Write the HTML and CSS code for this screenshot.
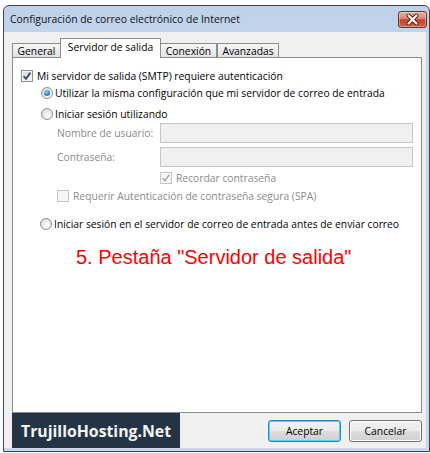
FILE: index.html
```html
<!DOCTYPE html>
<html lang="es">
<head>
<meta charset="utf-8">
<title>Configuración de correo electrónico de Internet</title>
<link rel="stylesheet" href="styles.css">
</head>
<body>
<div class="window">
  <div class="titlebar">
    <span class="title">Configuración de correo electrónico de Internet</span>
    <span class="close">
      <svg width="27" height="15" viewBox="0 0 27 15">
        <path d="M9.5 3.5 L17.5 11.5 M17.5 3.5 L9.5 11.5" stroke="#5b1a12" stroke-width="4" stroke-linecap="round" fill="none"/>
        <path d="M9.5 3.5 L17.5 11.5 M17.5 3.5 L9.5 11.5" stroke="#ffffff" stroke-width="2.2" stroke-linecap="round" fill="none"/>
      </svg>
    </span>
  </div>
  <div class="client">
    <div class="tabs">
      <div class="tab tab-general">General</div>
      <div class="tab tab-sel">Servidor de salida</div>
      <div class="tab tab-conexion">Conexión</div>
      <div class="tab tab-avanzadas">Avanzadas</div>
    </div>
    <div class="panel">
      <div class="row row-smtp">
        <span class="cb"><svg width="10" height="10" viewBox="0 0 10 10"><path d="M1.6 5.2 L4 7.8 L8.4 1.6" stroke="#2d4f8a" stroke-width="1.9" fill="none"/></svg></span>
        <span>Mi servidor de salida (SMTP) requiere autenticación</span>
      </div>
      <div class="row row-radio1">
        <span class="radio on"></span>
        <span>Utilizar la misma configuración que mi servidor de correo de entrada</span>
      </div>
      <div class="row row-radio2">
        <span class="radio"></span>
        <span>Iniciar sesión utilizando</span>
      </div>
      <div class="field field-user">
        <span class="lbl">Nombre de usuario:</span>
        <span class="input"></span>
      </div>
      <div class="field field-pass">
        <span class="lbl">Contraseña:</span>
        <span class="input"></span>
      </div>
      <div class="row row-remember dis">
        <span class="cb cb-dis"><svg width="10" height="10" viewBox="0 0 10 10"><path d="M1.6 5.2 L4 7.8 L8.4 1.6" stroke="#a9a9a9" stroke-width="1.6" fill="none"/></svg></span>
        <span>Recordar contraseña</span>
      </div>
      <div class="row row-spa dis">
        <span class="cb cb-dis"></span>
        <span>Requerir Autenticación de contraseña segura (SPA)</span>
      </div>
      <div class="row row-radio3">
        <span class="radio"></span>
        <span>Iniciar sesión en el servidor de correo de entrada antes de enviar correo</span>
      </div>
      <div class="note">5. Pestaña "Servidor de salida"</div>
    </div>
    <div class="footer">
      <div class="logo">TrujilloHosting.Net</div>
      <div class="buttons">
        <span class="btn btn-default">Aceptar</span>
        <span class="btn">Cancelar</span>
      </div>
    </div>
  </div>
</div>
</body>
</html>
```
FILE: styles.css
```css
* { box-sizing: border-box; }
html, body { margin: 0; padding: 0; background: #ffffff; }
body {
  width: 430px;
  height: 453px;
  overflow: hidden;
  font-family: "Open Sans", "Noto Sans", sans-serif;
  font-size: 10.3px;
  color: #000;
}
.window {
  margin: 5px 0 0 3px;
  width: 427px;
  height: 447px;
  border: 1px solid #3a4656;
  border-radius: 6px 6px 0 0;
  background: linear-gradient(#bfd2ea, #d5e3f4);
  display: flex;
  flex-direction: column;
}
.titlebar {
  height: 26px;
  flex: none;
  display: flex;
  align-items: center;
  padding: 0 2px 0 6px;
}
.title { font-size: 10.4px; color: #111; }
.close {
  margin-left: auto;
  width: 29px;
  height: 17px;
  border: 1px solid #7a2c22;
  border-radius: 3px;
  background: linear-gradient(#eab0a3 0%, #dc8272 45%, #c2412f 52%, #d2604c 100%);
  box-shadow: inset 0 0 0 1px rgba(255,255,255,0.35);
  display: flex;
  align-items: center;
  justify-content: center;
}
.client {
  flex: 1;
  background: #f0f0f0;
  border-right: 3px solid #c6d7ee;
  border-bottom: 3px solid #c6d7ee;
  padding: 6px 4px 0 8px;
  display: flex;
  flex-direction: column;
}
.tabs {
  height: 19px;
  flex: none;
  display: flex;
  align-items: flex-end;
}
.tab {
  height: 14px;
  border: 1px solid #898c95;
  border-bottom: 0;
  background: linear-gradient(#f7f7f7, #e2e2e2);
  display: flex;
  align-items: center;
  justify-content: center;
  font-size: 10.3px;
  line-height: 12px;
  white-space: nowrap;
}
.tab-general { width: 48px; border-right: 0; }
.tab-sel {
  width: 101px;
  height: 20px;
  margin-bottom: -1px;
  background: #ffffff;
  position: relative;
  z-index: 1;
  padding-bottom: 4px;
}
.tab-conexion { width: 56px; border-left: 0; }
.tab-avanzadas { width: 62px; }
.panel {
  height: 356px;
  flex: none;
  border: 1px solid #898c95;
  background: #ffffff;
  display: flex;
  flex-direction: column;
}
.row {
  height: 16px;
  display: flex;
  align-items: center;
  white-space: nowrap;
}
.row-smtp { margin-top: 10px; padding-left: 8px; }
.row-radio1 { margin-top: 1px; padding-left: 28px; }
.row-radio2 { margin-top: 5px; padding-left: 28px; }
.field {
  height: 20px;
  display: flex;
  align-items: center;
  padding-left: 44px;
  color: #8a8a8a;
}
.field-user { margin-top: 1px; }
.field-pass { margin-top: 4px; }
.lbl { width: 103px; }
.input {
  width: 253px;
  height: 20px;
  border: 1px solid #c3c6cc;
  background: #f0f0f0;
}
.row-remember { margin-top: 3px; padding-left: 147px; }
.row-spa { margin-top: 2px; padding-left: 44px; }
.row-radio3 { margin-top: 12px; padding-left: 27px; }
.dis { color: #8a8a8a; }
.cb {
  width: 12px;
  height: 12px;
  margin-right: 4px;
  border: 1px solid #8e8f8f;
  background: linear-gradient(135deg, #d6d6d6, #fbfbfb);
  box-shadow: inset 0 0 0 1px #f4f4f4;
  display: flex;
  align-items: center;
  justify-content: center;
  flex: none;
}
.cb-dis {
  border-color: #c4c4c4;
  background: #f6f6f6;
  box-shadow: none;
}
.radio {
  width: 12px;
  height: 12px;
  margin-right: 2px;
  border-radius: 50%;
  border: 1px solid #8e8f8f;
  background: radial-gradient(circle at 65% 70%, #fdfdfd, #d4d4d4);
  flex: none;
  display: flex;
  align-items: center;
  justify-content: center;
}
.radio.on::after {
  content: "";
  width: 6px;
  height: 6px;
  border-radius: 50%;
  background: radial-gradient(circle at 40% 35%, #9fd6fb 0%, #2f86c8 55%, #1a4f86 100%);
}
.note {
  margin-top: 13px;
  padding-left: 63px;
  height: 24px;
  line-height: 24px;
  font-family: "Liberation Sans", Arial, sans-serif;
  font-size: 20px;
  color: #ff0000;
  white-space: nowrap;
}
.footer {
  height: 35px;
  flex: none;
  display: flex;
  align-items: flex-start;
}
.logo {
  width: 168px;
  height: 35px;
  background: #243444;
  color: #f4f4f4;
  font-weight: 700;
  font-size: 15.8px;
  padding-left: 9px;
  display: flex;
  align-items: center;
  white-space: nowrap;
}
.buttons {
  margin-left: auto;
  margin-top: 7px;
  display: flex;
  gap: 8px;
}
.btn {
  width: 73px;
  height: 22px;
  border: 1px solid #707070;
  border-radius: 3px;
  background: linear-gradient(#f2f2f2 0%, #ebebeb 48%, #dddddd 52%, #cfcfcf 100%);
  box-shadow: inset 0 0 0 1px #fcfcfc;
  display: flex;
  align-items: center;
  justify-content: center;
  font-size: 10.3px;
}
.btn-default {
  border-color: #3c7fb1;
  box-shadow: inset 0 0 0 1px #48d4f6;
}
```
